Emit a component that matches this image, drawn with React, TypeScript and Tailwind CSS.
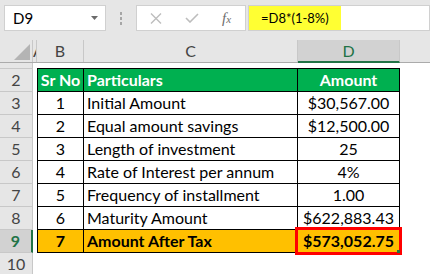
const rows = [
  { n: "3", sr: "1", p: "Initial Amount", a: "$30,567.00" },
  { n: "4", sr: "2", p: "Equal amount savings", a: "$12,500.00" },
  { n: "5", sr: "3", p: "Length of investment", a: "25" },
  { n: "6", sr: "4", p: "Rate of Interest per annum", a: "4%" },
  { n: "7", sr: "5", p: "Frequency of installment", a: "1.00" },
  { n: "8", sr: "6", p: "Maturity Amount", a: "$622,883.43" },
];

function RowHead({ label, sel }: { label: string; sel?: boolean }) {
  return (
    <div
      className={
        sel
          ? "w-[33px] shrink-0 bg-[#d2d2d2] border-b border-[#c8c8c8] border-r-2 border-r-[#217346] flex items-center justify-center text-[#217346]"
          : "w-[33px] shrink-0 bg-[#e6e6e6] border-b border-r border-[#c8c8c8] flex items-center justify-center text-[#444]"
      }
    >
      {label}
    </div>
  );
}

export default function App() {
  return (
    <div className="w-[430px] h-[274px] overflow-hidden bg-white font-[Lato,sans-serif] text-[16px] leading-none text-black">
      {/* formula bar */}
      <div className="h-[40px] bg-[#e6e6e6] flex items-start pt-[5px] pl-[4px]">
        <div className="w-[102px] h-[26px] bg-white border border-[#d0d0d0] flex items-center pl-[8px] pr-[7px] text-[15px]">
          <span className="flex-1">D9</span>
          <svg width="7" height="4" viewBox="0 0 7 4">
            <path d="M0 0 L7 0 L3.5 4 Z" fill="#6b6b6b" />
          </svg>
        </div>
        <div className="w-[30px] h-[26px] flex flex-col items-center justify-center gap-[2px]">
          <div className="w-[2px] h-[3px] bg-[#a6a6a6]" />
          <div className="w-[2px] h-[3px] bg-[#a6a6a6]" />
          <div className="w-[2px] h-[3px] bg-[#a6a6a6]" />
        </div>
        <div className="w-[110px] h-[26px] bg-white border border-[#d0d0d0] flex items-center">
          <svg width="12" height="11" viewBox="0 0 12 11" className="ml-[13px]">
            <path d="M1 0.5 L11 10.5 M11 0.5 L1 10.5" stroke="#bdbdbd" strokeWidth="1.4" />
          </svg>
          <svg width="14" height="10" viewBox="0 0 14 10" className="ml-[23px]">
            <path d="M1 5 L5 9 L13 1" stroke="#bdbdbd" strokeWidth="1.6" fill="none" />
          </svg>
          <span className="ml-[23px] font-['Liberation_Serif',serif] italic text-[#6d6d6d] text-[15px]">
            f<span className="text-[11px]">x</span>
          </span>
        </div>
        <div className="ml-[2px] flex-1 h-[26px] bg-white border border-[#d0d0d0] flex">
          <div className="w-[92px] h-full bg-[#ffff33] flex items-center pl-[12px] text-[13px]">=D8*(1-8%)</div>
        </div>
      </div>

      {/* column headers */}
      <div className="flex h-[23px] bg-[#e6e6e6] border-b border-[#ababab] text-[#444]">
        <div className="w-[33px] shrink-0 border-r border-[#c8c8c8] flex items-end justify-end pr-[2px] pb-[2px]">
          <svg width="16" height="16" viewBox="0 0 16 16">
            <path d="M16 0 L16 16 L0 16 Z" fill="#b4b4b4" />
          </svg>
        </div>
        <div className="w-[4px] shrink-0 border-r border-[#c8c8c8] overflow-hidden flex items-center">A</div>
        <div className="w-[47px] shrink-0 border-r border-[#c8c8c8] flex items-center justify-center">B</div>
        <div className="w-[214px] shrink-0 border-r border-[#c8c8c8] flex items-center justify-center">C</div>
        <div className="w-[102px] shrink-0 bg-[#d2d2d2] border-r border-[#c8c8c8] border-b-2 border-b-[#217346] -mb-[1px] flex items-center justify-center text-[#217346]">
          D
        </div>
        <div className="flex-1" />
      </div>

      {/* row 1 (tiny) */}
      <div className="flex h-[6px]">
        <RowHead label="" />
        <div className="w-[4px] shrink-0" />
        <div className="w-[363px] shrink-0 border-b border-black ml-0" />
      </div>

      {/* row 2 header */}
      <div className="flex h-[23px]">
        <RowHead label="2" />
        <div className="w-[4px] shrink-0" />
        <div className="w-[47px] shrink-0 bg-[#00b050] border-l border-r border-b border-black flex items-center justify-center font-bold text-white">
          Sr No
        </div>
        <div className="w-[214px] shrink-0 bg-[#00b050] border-r border-b border-black flex items-center pl-[3px] font-bold text-white">
          Particulars
        </div>
        <div className="w-[102px] shrink-0 bg-[#00b050] border-r border-b border-black flex items-center justify-center font-bold text-white">
          Amount
        </div>
      </div>

      {rows.map((r) => (
        <div key={r.n} className="flex h-[23px]">
          <RowHead label={r.n} />
          <div className="w-[4px] shrink-0" />
          <div className="w-[47px] shrink-0 border-l border-r border-b border-black flex items-center justify-center">
            {r.sr}
          </div>
          <div className="w-[214px] shrink-0 border-r border-b border-black flex items-center pl-[3px]">{r.p}</div>
          <div className="w-[102px] shrink-0 border-r border-b border-black flex items-center justify-center">
            {r.a}
          </div>
        </div>
      ))}

      {/* row 9 */}
      <div className="flex h-[23px] font-bold">
        <RowHead label="9" sel />
        <div className="w-[4px] shrink-0" />
        <div className="w-[47px] shrink-0 bg-[#ffc000] border-l border-r border-b border-black flex items-center justify-center">
          7
        </div>
        <div className="w-[214px] shrink-0 bg-[#ffc000] border-r border-b border-black flex items-center pl-[3px]">
          Amount After Tax
        </div>
        <div className="relative w-[102px] shrink-0 bg-[#ffc000] border-r border-b border-black flex items-center justify-center">
          $573,052.75
          <div className="absolute left-[-3px] top-[-3px] w-[107px] h-[28px] border-[3px] border-[#ff0000]" />
          <div className="absolute right-[-1px] bottom-[-1px] w-[3px] h-[3px] bg-[#217346]" />
        </div>
      </div>

      {/* row 10 */}
      <div className="flex h-[23px]">
        <RowHead label="10" />
      </div>
    </div>
  );
}
